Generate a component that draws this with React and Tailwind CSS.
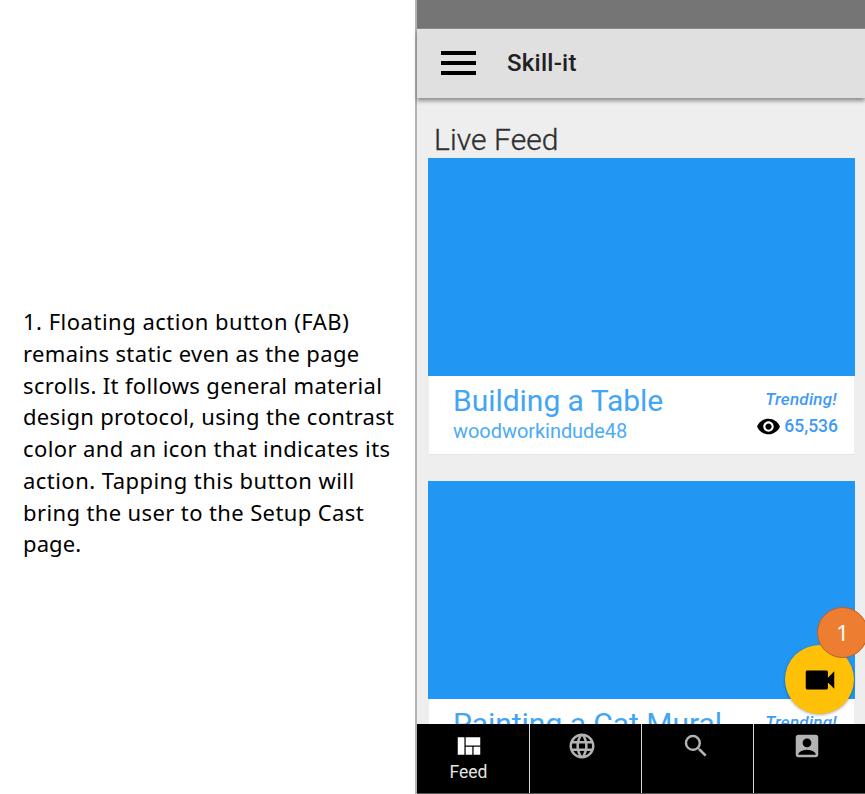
import React from "react";
import {
  MdRemoveRedEye,
  MdVideocam,
  MdViewQuilt,
  MdLanguage,
  MdSearch,
  MdAccountBox,
} from "react-icons/md";

const noteLines = [
  { text: "1. Floating action button (FAB)", style: "tracking-[0.5px]" },
  { text: "remains static even as the page", style: "tracking-[0.37px]" },
  { text: "scrolls. It follows general material", style: "tracking-[0.35px]" },
  { text: "design protocol, using the contrast", style: "tracking-[0.32px]" },
  { text: "color and an icon that indicates its", style: "tracking-[0.4px]" },
  { text: "action. Tapping this button will", style: "tracking-[0.46px]" },
  { text: "bring the user to the Setup Cast", style: "tracking-[0.38px]" },
  { text: "page.", style: "tracking-[0.1px]" },
];

function Note() {
  return (
    <aside className="w-[415px] shrink-0 pl-[23px] pt-[306px] font-['Noto_Sans',sans-serif] text-[22px] leading-[31.75px] text-black">
      {noteLines.map((line) => (
        <p key={line.text} className={`whitespace-nowrap ${line.style}`}>
          {line.text}
        </p>
      ))}
    </aside>
  );
}

function Card({ title, author, views }) {
  return (
    <article className="w-[427px]">
      <div className="h-[218px] bg-[#2196f3]" />
      <div className="mx-px flex h-[79px] justify-between border-b border-[#e4e4e4] bg-white pl-[24px] pr-[16px]">
        <div className="pt-[7px]">
          <h2 className="h-[35px] whitespace-nowrap text-[30px] leading-[35px] tracking-[-0.03px] text-[#42a5f5]">{title}</h2>
          {author && (
            <p className="whitespace-nowrap text-[20px] leading-[26px] tracking-[-0.05px] text-[#4dabf5]">{author}</p>
          )}
        </div>
        <div className="flex flex-col items-end pt-[11px] font-medium text-[#3f9af5]">
          <p className="pr-[1px] text-[17px] italic leading-[24px] tracking-[0.25px]">Trending!</p>
          {views && (
            <p className="flex items-center gap-[3px] text-[17.5px] leading-[30px]">
              <MdRemoveRedEye className="size-[25px] text-black" />
              <span>{views}</span>
            </p>
          )}
        </div>
      </div>
    </article>
  );
}

function Tab({ icon: Icon, label, className }) {
  return (
    <button
      className={`flex h-full flex-col items-center border-[#d8d8d8] pt-[7px] text-[#b3b3b3] ${className}`}
    >
      <Icon className="size-[30px]" />
      {label && <span className="pt-px text-[17.5px] leading-[21px] text-[#e4e4e4]">{label}</span>}
    </button>
  );
}

export default function App() {
  return (
    <div className="flex h-[794px] w-[865px] overflow-hidden bg-white font-[Roboto,sans-serif]">
      <Note />
      <main className="relative flex w-[450px] flex-col border-l-2 border-[#b3b3b3] bg-[#eeeeee]">
        <div className="h-[29px] shrink-0 border-b border-[#8c8c8c] bg-[#757575]" />
        <header className="z-10 flex h-[69px] shrink-0 items-center bg-[#e0e0e0] pb-[2px] pl-6 shadow-[0_3px_4px_0_rgba(0,0,0,0.4)]">
          <div className="flex w-[35px] flex-col gap-[6px]">
            <span className="h-[4px] bg-black" />
            <span className="h-[4px] bg-black" />
            <span className="h-[4px] bg-black" />
          </div>
          <h1 className="pl-[31px] text-[24px] font-medium leading-[30px] tracking-[0.25px] text-[#212121]">Skill-it</h1>
        </header>
        <section className="min-h-0 flex-1 overflow-hidden pl-[11px] pt-[24px]">
          <h2 className="h-[36px] pl-[6px] text-[30px] font-light leading-[36px] tracking-[0.08px] text-[#303030] [-webkit-text-stroke:0.35px_#303030]">
            Live Feed
          </h2>
          <div className="flex flex-col gap-[26px]">
            <Card title="Building a Table" author="woodworkindude48" views="65,536" />
            <Card title="Painting a Cat Mural" />
          </div>
        </section>
        <nav className="flex h-[70px] shrink-0 border-b border-[#555] bg-black">
          <Tab icon={MdViewQuilt} label="Feed" className="w-[113px] border-r pr-[9px] text-white!" />
          <Tab icon={MdLanguage} className="w-[112px] border-r pr-[8px]" />
          <Tab icon={MdSearch} className="w-[112px] border-r pr-[4px]" />
          <Tab icon={MdAccountBox} className="w-[111px] pr-[5px]" />
        </nav>
        <button className="absolute left-[368px] top-[645px] z-20 flex size-[69px] items-center justify-center rounded-full bg-[#ffc107] shadow-[0_1px_3px_rgba(0,0,0,0.35)]">
          <MdVideocam className="size-[38px] text-black" />
        </button>
        <span className="absolute left-[400px] top-[607px] z-30 flex size-[51px] items-center justify-center rounded-full border border-[#b8602c] bg-[#ed7d31] font-['Noto_Sans',sans-serif] text-[22px] text-white">
          1
        </span>
      </main>
    </div>
  );
}
